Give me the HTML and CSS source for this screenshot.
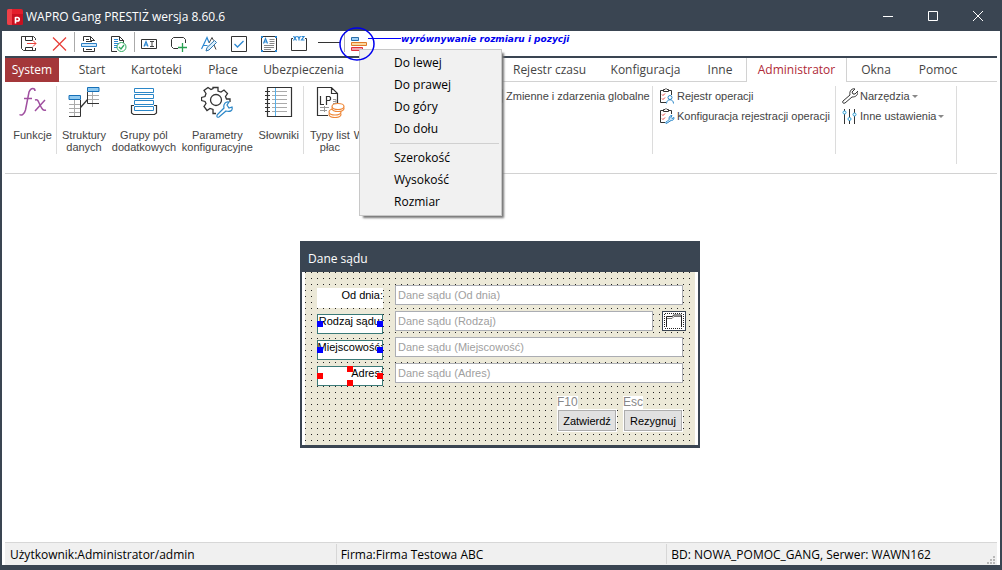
FILE: index.html
```
<!DOCTYPE html>
<html lang="pl">
  <head>
    <meta charset="utf-8">
    <meta name="viewport" content="width=device-width, initial-scale=1">
    <title>WAPRO Gang PRESTIŻ</title>
    <link rel="stylesheet" href="styles.css">
  </head>
  <body>
    <div class="window">
      <header class="titlebar">
        <svg class="logo" width="16" height="16" viewBox="0 0 16 16">
          <rect width="16" height="16" rx="2" fill="#e31e2b"/>
          <path d="M0 2a2 2 0 0 1 2-2h3v16H2a2 2 0 0 1-2-2z" fill="#ee4048"/>
          <path d="M5 5h11v9a2 2 0 0 1-2 2H5z" fill="#c9101f"/>
          <path d="M8.500 14.500V8M8.500 8.500h2a1.500 1.500 0 0 1 0 3.500h-2" fill="none" stroke="#fff" stroke-width="1.600"/>
        </svg>
        <h1>WAPRO Gang PRESTIŻ wersja 8.60.6</h1>
        <button class="win-btn" aria-label="Minimalizuj"><svg width="12" height="12"><path d="M1 6.500h10" stroke="#fff"/></svg></button>
        <button class="win-btn" aria-label="Maksymalizuj"><svg width="12" height="12"><path d="M1.500 1.500h9v9h-9z" fill="none" stroke="#fff"/></svg></button>
        <button class="win-btn" aria-label="Zamknij"><svg width="12" height="12"><path d="M1 1l10 10M11 1L1 11" stroke="#fff"/></svg></button>
      </header>

      <div class="client">
        <div class="toolbar">
          <button class="tool" aria-label="Zapisz i wyjdź">
            <svg width="16" height="16" viewBox="0 0 16 16" fill="none"><path d="M14.500 4V2.500l-2-2H.5v12l2 2h12V12M4.500.5v4h7v-4M4.500 14.500v-3h7v3" stroke="#333"/><path d="M6 7.500h9M12 4.500l3 3-3 3" stroke="#e8403a"/></svg>
          </button>
          <button class="tool" aria-label="Anuluj">
            <svg width="16" height="16" viewBox="0 0 16 16"><path d="M2 1.500l13 13M15 1.500l-13 13" stroke="#e8403a" stroke-width="1.300"/></svg>
          </button>
          <button class="tool split" aria-label="Drukuj">
            <svg width="16" height="16" viewBox="0 0 16 16" fill="none"><path d="M2.500 5V.5h7l4 4V5M9.500.5v4h4M2.500 12v3.500h11V12M5 3.500h3M5 5.500h6M5 13.500h6" stroke="#333"/><path d="M.5 7.500h15v3H.5z" fill="#cfe8fb" stroke="#2b7fc4"/></svg>
          </button>
          <button class="tool" aria-label="Sprawdź">
            <svg width="16" height="16" viewBox="0 0 16 16" fill="none"><path d="M6 15.500H.5V.5h8l4 4V7M8.500.5v4h4" stroke="#333"/><path d="M3 3.500h4M3 5.500h4M3 7.500h6M3 9.500h3M3 11.500h3" stroke="#2b87d1"/><circle cx="10.500" cy="11" r="4.500" fill="#fff" stroke="#2fa860"/><path d="M8 11l2 2 3-4" stroke="#2fa860" stroke-width="1.300"/></svg>
          </button>
          <button class="tool split" aria-label="Pole tekstowe">
            <svg width="16" height="16" viewBox="0 0 16 16" fill="none"><path d="M.5 3.500h15v9H.5z" stroke="#333"/><path d="M3 10.500l2-5 2 5M4 9h2" stroke="#2b87d1" stroke-width="1.200"/><path d="M9 5.500h4M9 10.500h4M11 5.500v5" stroke="#444"/></svg>
          </button>
          <button class="tool" aria-label="Dodaj ramkę">
            <svg width="16" height="16" viewBox="0 0 16 16" fill="none"><path d="M7 12.500H2.500l-2-2v-7l2-2h10l2 2V7" stroke="#333"/><path d="M7 11.500h9M11.500 7v9" stroke="#26a050" stroke-width="1.300"/></svg>
          </button>
          <button class="tool" aria-label="Edytuj czcionkę">
            <svg width="16" height="16" viewBox="0 0 16 16" fill="none"><path d="M.5 13L6 1.500l2 5M2.500 9.500h4" stroke="#2b87d1" stroke-width="1.200"/><path d="M8 7l3-5.500 1.500 3M13 9l2 4.500" stroke="#444"/><path d="M5 15l1-3.500 7.500-7 2 2L8 14z" fill="#dceefb" stroke="#2f78b0"/></svg>
          </button>
          <button class="tool" aria-label="Pole wyboru">
            <svg width="16" height="16" viewBox="0 0 16 16" fill="none"><path d="M.5.5h15v15H.5z" stroke="#333"/><path d="M3.500 8l3 3 6-6" stroke="#2b87d1" stroke-width="1.300"/></svg>
          </button>
          <button class="tool" aria-label="Blok tekstu">
            <svg width="16" height="16" viewBox="0 0 16 16" fill="none"><path d="M2 .5h12M2 15.500h12M.5 2v12M15.500 2v12" stroke="#333"/><path d="M8.500 3.500h5M8.500 5.500h5M8.500 7.500h5M3 9.500h10M3 11.500h10M3 13.500h7" stroke="#888"/><path d="M2.500 7.500l2-5 2 5M3.500 6h2" stroke="#2b87d1" stroke-width="1.200"/><path d="M0 0h2v2H0zM14 0h2v2h-2zM0 14h2v2H0zM14 14h2v2h-2z" fill="#2b87d1"/></svg>
          </button>
          <button class="tool" aria-label="XYZ">
            <svg width="16" height="16" viewBox="0 0 16 16" fill="none"><path d="M2 2.500H.5v12h15v-12H14" stroke="#333"/><path d="M2.500 0l3 4.500M5.500 0l-3 4.500M6.500 0L8 2.500 9.500 0M8 2.500v2M10.500.5H13L10.500 4H13.500" stroke="#2b87d1" stroke-width="1.200"/></svg>
          </button>
          <button class="tool" aria-label="Linia">
            <svg width="22" height="16" viewBox="0 0 22 16"><path d="M0 6.500h22" stroke="#333"/></svg>
          </button>
          <button class="tool split" aria-label="Wyrównaj">
            <svg width="16" height="16" viewBox="0 0 16 16"><path d="M.5 1.500h7v3h-7z" fill="#9fd0f5" stroke="#2b6fa8"/><path d="M.5 6.500h15v3H.5z" fill="#fbd9a0" stroke="#e07b28"/><path d="M.5 11.500h11v3H.5z" fill="#f5a0a8" stroke="#e0313c"/></svg>
          </button>

          <div class="menu" role="menu">
            <button role="menuitem">Do lewej</button>
            <button role="menuitem">Do prawej</button>
            <button role="menuitem">Do góry</button>
            <button role="menuitem">Do dołu</button>
            <hr>
            <button role="menuitem">Szerokość</button>
            <button role="menuitem">Wysokość</button>
            <button role="menuitem">Rozmiar</button>
          </div>

          <div class="callout">
            <svg width="62" height="36" fill="none"><ellipse cx="18" cy="17" rx="17" ry="16" stroke="#0000ee" stroke-width="1.500"/><path d="M29 11.500h33" stroke="#0000ff"/></svg>
            <span>wyrównywanie rozmiaru i pozycji</span>
          </div>
        </div>

        <nav class="tabs">
          <button class="tab system">System</button>
          <button class="tab">Start</button>
          <button class="tab">Kartoteki</button>
          <button class="tab">Płace</button>
          <button class="tab">Ubezpieczenia</button>
          <span class="tab-gap"></span>
          <button class="tab">Rejestr czasu</button>
          <button class="tab">Konfiguracja</button>
          <button class="tab">Inne</button>
          <button class="tab active">Administrator</button>
          <button class="tab">Okna</button>
          <button class="tab">Pomoc</button>
          <span class="tab-rest"></span>
        </nav>

        <div class="ribbon">
          <div class="group functions">
            <button class="big">
              <svg width="32" height="32" viewBox="0 0 32 32" fill="none" stroke="#a050a0" stroke-width="1.500"><path d="M18 5c0-3-4-4-6 1L8.500 24c-1 4-4 6-6 4.500M7 12.500h8"/><path d="M18 14c3-1 3 1 5 5s3 6 6 5M28 14L18 25"/></svg>
              Funkcje
            </button>
          </div>
          <div class="group dictionaries">
            <button class="big">
              <svg width="32" height="32" viewBox="0 0 32 32" fill="none"><path d="M12.500 21.500L20 13" stroke="#333" stroke-width="1.300"/><path d="M6.500 14v16M1 18.500h11M1 22.500h11M1 26.500h11M24.500 6v15M20 9.500h11M20 13.500h11M20 17.500h11" stroke="#aaa"/><path d="M12.500 14v16.500H1M19.500 6v11.500H31" stroke="#333"/><path d="M1 9.500h11.500v4H1zM19.500 1.500H31v4H19.500z" fill="#90caf0" stroke="#1670b8"/></svg>
              Struktury<br>danych
            </button>
            <button class="big">
              <svg width="32" height="32" viewBox="0 0 32 32" fill="none"><path d="M6 19.500H3.500V27l2 1.500h21l2-1.500v-7.500H26" stroke="#333" stroke-width="1.200"/><path d="M6.500 2.500h19v4h-19zM6.500 8.500h19v4h-19zM6.500 14.500h19v4h-19zM6.500 20.500h19v4h-19z" stroke="#2b87c8"/></svg>
              Grupy pól<br>dodatkowych
            </button>
            <button class="big">
              <svg width="32" height="32" viewBox="0 0 32 32" fill="none"><path d="M15 27.500h-3v-4l-3-1-3 2-3-4 2-3-1-2-3.500-1v-3l3.500-1 1-3-2-3 4-3 3 2 2-1V1.500h5V5l3 1 3-2 3.500 3.500-2 3 1 2.500H29v3" stroke="#333" stroke-width="1.300"/><circle cx="15" cy="14" r="5.500" stroke="#333" stroke-width="1.300"/><path d="M18 31c-2 1-3-1-1-3l6-6c-1-4 2-7 5-6l-2 3 2 3 3-1c1 4-2 5-6 4z" fill="#fff" stroke="#2b87c8" stroke-width="1.200"/></svg>
              Parametry<br>konfiguracyjne
            </button>
            <button class="big">
              <svg width="32" height="32" viewBox="0 0 32 32" fill="none"><path d="M9 5.500h15M9 9.500h15M9 13.500h15M9 17.500h15M9 21.500h15M9 25.500h15" stroke="#aaa"/><path d="M12.500 2v28" stroke="#55b0ea"/><path d="M4.500 1.500h24v29h-24zM2 5.500h5M2 9.500h5M2 13.500h5M2 17.500h5M2 21.500h5M2 25.500h5" stroke="#333" stroke-width="1.200"/></svg>
              Słowniki
            </button>
          </div>
          <div class="group payroll">
            <button class="big">
              <svg width="32" height="32" viewBox="0 0 32 32" fill="none"><path d="M14 29.500H3.500v-28h14l6 6V17M17.500 1.500v6h6M6.500 10v8.500H10M12.500 19v-8.500h3l1 1v2l-1 1h-3" stroke="#333" stroke-width="1.200"/><path d="M19 13.500h3v4h-3M19 15.500h3M6 21.500h9M6 24.500h7M10.500 20v6" stroke="#999"/><g fill="#fff" stroke="#ef8636" stroke-width="1.200"><ellipse cx="21" cy="28.500" rx="6" ry="3"/><ellipse cx="21" cy="26" rx="6" ry="3"/><ellipse cx="24" cy="22.500" rx="6" ry="3"/><ellipse cx="24" cy="20.500" rx="6" ry="3"/></g></svg>
              Typy list<br>płac
            </button>
            <span class="cut">W</span>
          </div>
          <div class="group globals">
            <button class="small">
              <svg width="16" height="16" viewBox="0 0 16 16" fill="none"><path d="M4 1.500H1.500v13H4M12 1.500h2.500v13H12M5 5l6 6M11 5l-6 6" stroke="#333"/></svg>
              Zmienne i zdarzenia globalne
            </button>
          </div>
          <div class="group registry">
            <button class="small">
              <svg width="16" height="16" viewBox="0 0 16 16" fill="none"><path d="M7 14.500H1.500v-12H4M10 2.500h2.500V7M4.500 3.500v-2h1.500l1-1 1 1h1.500v2z" stroke="#333"/><path d="M3 6.500l1 1 2-2M3 10.500l1 1 2-2" stroke="#e8403a"/><circle cx="11" cy="9.500" r="2" stroke="#2b87c8"/><path d="M7.500 15.500c0-5 7-5 7 0" stroke="#2b87c8"/></svg>
              Rejestr operacji
            </button>
            <button class="small">
              <svg width="16" height="16" viewBox="0 0 16 16" fill="none"><path d="M6 14.500H1.500v-12H4M10 2.500h2.500V6M4.500 3.500v-2h1.500l1-1 1 1h1.500v2z" stroke="#333"/><path d="M3 6.500l1 1 2-2M3 10.500l1 1 2-2" stroke="#e8403a"/><path d="M7 15.500c-1-1 0-2 1-2l2-2c0-3 1-4 3-4l-1 2 1 1 2-1c0 3-2 3-3 3l-3 2z" fill="#c8e4f8" stroke="#2b87c8"/></svg>
              Konfiguracja rejestracji operacji
            </button>
          </div>
          <div class="group tools">
            <button class="small">
              <svg width="16" height="16" viewBox="0 0 16 16" fill="none"><path d="M3 15c-2 1-3-1-2-2l7-6C7 3 10 0 13 1l-3 3 1 2h2l3-3c0 4-2 6-6 6z" stroke="#333"/></svg>
              Narzędzia <i class="arrow"></i>
            </button>
            <button class="small">
              <svg width="16" height="16" viewBox="0 0 16 16" fill="none"><path d="M2.500 1v15M7.500 1v15M12.500 1v15" stroke="#333"/><g fill="#fff" stroke="#2b9fd8"><circle cx="2.500" cy="4.500" r="1.500"/><circle cx="7.500" cy="11" r="1.500"/><circle cx="12.500" cy="6.500" r="1.500"/></g></svg>
              Inne ustawienia <i class="arrow"></i>
            </button>
          </div>
        </div>

        <main class="desktop">
          <form class="dialog">
            <h2>Dane sądu</h2>
            <div class="canvas">
              <div class="row">
                <label for="od-dnia">Od dnia:</label>
                <input id="od-dnia" placeholder="Dane sądu (Od dnia)">
              </div>
              <div class="row">
                <label for="rodzaj" class="selected">Rodzaj sądu:<i class="handle left"></i><i class="handle right"></i></label>
                <input id="rodzaj" placeholder="Dane sądu (Rodzaj)">
                <button type="button" class="browse" aria-label="Wybierz">
                  <svg width="20" height="16" viewBox="0 0 20 16" fill="none"><path d="M1 .5h18M1 15.500h18M.5 1v14M19.500 1v14" stroke="#222" stroke-dasharray="1 1"/><path d="M2.500 14V3.500h6l1-1.500h8v12" stroke="#222"/><path d="M3 5.500h5l2-2h7" stroke="#777"/></svg>
                </button>
              </div>
              <div class="row">
                <label for="miejscowosc" class="selected">Miejscowość:<i class="handle left"></i><i class="handle right"></i></label>
                <input id="miejscowosc" placeholder="Dane sądu (Miejscowość)">
              </div>
              <div class="row">
                <label for="adres" class="selected primary">Adres:<i class="handle left"></i><i class="handle right"></i><i class="handle top"></i><i class="handle bottom"></i></label>
                <input id="adres" placeholder="Dane sądu (Adres)">
              </div>
              <div class="actions">
                <div><kbd>F10</kbd><button type="button">Zatwierdź</button></div>
                <div><kbd>Esc</kbd><button type="button">Rezygnuj</button></div>
              </div>
            </div>
          </form>
        </main>

        <footer class="statusbar">
          <span>Użytkownik:Administrator/admin</span>
          <span>Firma:Firma Testowa ABC</span>
          <span>
            BD: NOWA_POMOC_GANG, Serwer: WAWN162
            <svg width="8" height="8" fill="#b8b8b8"><path d="M6 0h2v2H6zM3 3h2v2H3zM6 3h2v2H6zM0 6h2v2H0zM3 6h2v2H3zM6 6h2v2H6z"/></svg>
          </span>
        </footer>
      </div>
    </div>
  </body>
</html>
```

FILE: styles.css
```
* {
  box-sizing: border-box;
}

body {
  margin: 0;
  font: 12px/16px "Open Sans", "Noto Sans", sans-serif;
  color: #000;
}

button {
  margin: 0;
  padding: 0;
  border: 0;
  background: none;
  font: inherit;
  color: inherit;
}

svg {
  display: block;
  flex: none;
}

.window {
  display: flex;
  flex-direction: column;
  min-height: 100vh;
  padding: 0 2px 5px;
  background: #3a4552;
}

/* title bar */

.titlebar {
  display: flex;
  align-items: center;
  height: 31px;
  padding: 2px 0 0 5px;
  color: #fff;
}

.titlebar h1 {
  flex: 1;
  margin: 0 0 0 3px;
  font-size: 12px;
  font-weight: normal;
}

.win-btn {
  display: flex;
  align-items: center;
  justify-content: center;
  width: 45px;
  height: 29px;
  padding-bottom: 2px;
}

.client {
  display: flex;
  flex-direction: column;
  flex: 1;
  padding: 0 3px;
  background: #fff;
}

/* toolbar */

.toolbar {
  position: relative;
  display: flex;
  height: 27px;
  padding-left: 9px;
  border-bottom: 2px solid #3a4552;
}

.tool {
  display: flex;
  align-items: center;
  justify-content: center;
  width: 30px;
  height: 25px;
}

.split {
  background: linear-gradient(#aaa, #aaa) 0 1px / 1px 20px no-repeat;
}

.menu {
  position: absolute;
  z-index: 1;
  top: 18px;
  left: 354px;
  width: 143px;
  padding: 2px;
  border: 1px solid #c8c8c8;
  background: #f1f1f1;
  box-shadow: 3px 3px 2px -1px #777;
}

.menu button {
  display: block;
  width: 100%;
  height: 22px;
  padding-left: 32px;
  text-align: left;
}

.menu hr {
  margin: 3px 0 3px 28px;
  border: 0;
  border-top: 1px solid #d0d0d0;
}

.callout {
  position: absolute;
  z-index: 2;
  top: -4px;
  left: 334px;
  display: flex;
  font: italic bold 9px/24px "DejaVu Sans", sans-serif;
  color: #0000ee;
  white-space: nowrap;
  pointer-events: none;
}

/* ribbon */

.tabs {
  display: grid;
  grid-template-columns: 54px 59px 77px 56px 105px 146px 95px 97px 52px 101px 58px 66px 1fr;
  height: 24px;
  color: #444;
}

.tab,
.tab-gap,
.tab-rest {
  border-bottom: 1px solid #d2d2d2;
  white-space: nowrap;
}

.system {
  border-color: #a4373a;
  background: #a4373a;
  color: #fff;
}

.system + .tab {
  padding-left: 7px;
}

.active {
  border: solid #d2d2d2;
  border-width: 0 1px;
  color: #b02a37;
}

.ribbon {
  display: flex;
  height: 92px;
  padding-top: 4px;
  border-bottom: 1px solid #d2d2d2;
  font: 11px/12px "Liberation Sans", Arial, sans-serif;
  color: #444;
}

.group {
  display: flex;
  align-items: flex-start;
  height: 68px;
  border-right: 1px solid #dcdcdc;
  white-space: nowrap;
}

.big {
  display: flex;
  flex-direction: column;
  align-items: center;
  gap: 11px;
}

.functions {
  width: 52px;
  padding-left: 4px;
  justify-content: center;
}

.dictionaries {
  width: 247px;
  padding: 0 4px 0 5px;
  justify-content: space-between;
}

.payroll {
  width: 150px;
  gap: 4px;
  padding-left: 6px;
  border: 0;
}

.cut {
  padding-top: 43px;
}

.globals,
.registry,
.tools {
  flex-direction: column;
}

.globals {
  width: 199px;
  padding-left: 34px;
}

.registry {
  width: 183px;
  padding-left: 6px;
}

.tools {
  width: 121px;
  height: 78px;
  padding-left: 6px;
}

.small {
  display: flex;
  align-items: center;
  gap: 2px;
  height: 20px;
}

.arrow {
  border: 3px solid transparent;
  border-top-color: #888;
  border-bottom: 0;
}

/* designed form */

.desktop {
  flex: 1;
  padding: 67px 2px 67px 0;
}

.dialog {
  width: 400px;
  margin: 0 auto;
  border: solid #3a4552;
  border-width: 0 2px 3px;
  background: #fff;
  font: 11px/14px "Liberation Sans", Arial, sans-serif;
}

.dialog h2 {
  margin: 0;
  padding: 10px 6px 5px;
  background: #3a4552;
  color: #fff;
  font: 12px/16px "Open Sans", "Noto Sans", sans-serif;
}

.canvas {
  display: flex;
  flex-direction: column;
  gap: 6px;
  margin: 0 3px;
  padding: 13px 12px;
  background: conic-gradient(at 1px 1px, #ece9d8 75%, #222 0) 0 0 / 6px 6px;
}

.row {
  display: flex;
  height: 20px;
}

.row label {
  position: relative;
  display: flex;
  justify-content: flex-end;
  width: 66px;
  height: 20px;
  margin: 3px 12px 0 0;
  background: #fff;
  white-space: nowrap;
  overflow: hidden;
}

.row .selected {
  outline: 1px solid #3b7a78;
  outline-offset: -1px;
}

.row input {
  flex: 1;
  min-width: 0;
  padding: 0 2px;
  border: 1px solid #abadb3;
  border-radius: 0;
  background: #fff;
  font: inherit;
}

.row input::placeholder {
  color: #a0a0a0;
}

.browse {
  display: flex;
  align-items: center;
  justify-content: center;
  width: 24px;
  margin: 0 -3px 0 9px;
  border: 1px solid #3a4552;
  background: #fff;
}

.handle {
  position: absolute;
  width: 6px;
  height: 6px;
  background: #00f;
}

.primary .handle {
  background: #f00;
}

.handle.left {
  top: 7px;
  left: 0;
}

.handle.right {
  top: 7px;
  right: 0;
}

.handle.top {
  top: 0;
  left: 30px;
}

.handle.bottom {
  bottom: 0;
  left: 30px;
}

.actions {
  display: flex;
  justify-content: flex-end;
  gap: 6px;
  margin-top: 7px;
}

.actions kbd {
  display: table;
  background: #fff;
  font: 12px/13px "Liberation Sans", Arial, sans-serif;
  color: #888;
}

.actions button {
  display: block;
  width: 58px;
  height: 21px;
  margin: 1px;
  border: 1px solid #adadad;
  box-shadow: 0 0 0 1px #fff;
  background: #e1e1e1;
}

/* status bar */

.statusbar {
  display: grid;
  grid-template-columns: 1fr 1fr 1fr;
  height: 23px;
  border-top: 1px solid #d7d7d7;
  background: #f0f0f0;
}

.statusbar span {
  display: flex;
  justify-content: space-between;
  margin: 1px 0;
  padding: 3px 2px 0 4px;
  border-left: 1px solid #d7d7d7;
  white-space: nowrap;
}

.statusbar span:first-child {
  border-color: transparent;
}

.statusbar svg {
  align-self: end;
}
```
